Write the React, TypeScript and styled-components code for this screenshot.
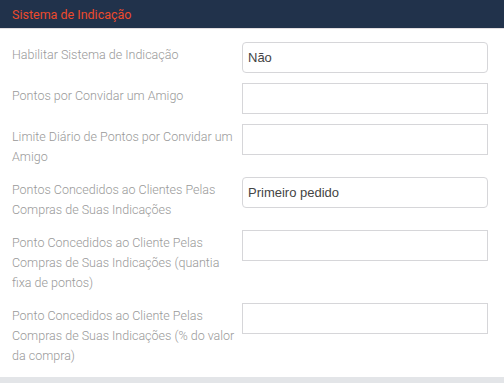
import * as React from "react";
import styled, { createGlobalStyle } from "styled-components";

const GlobalStyle = createGlobalStyle`
    body {
        margin: 0;
        background: #e3e5e8;
        font-family: Roboto, "Liberation Sans", sans-serif;
    }
`;

type Field = {
    label: string
    value?: string
    select?: boolean
}

const fields: Field[] = [
    { label: "Habilitar Sistema de Indicação", value: "Não", select: true },
    { label: "Pontos por Convidar um Amigo" },
    { label: "Limite Diário de Pontos por Convidar um Amigo" },
    { label: "Pontos Concedidos ao Clientes Pelas Compras de Suas Indicações", value: "Primeiro pedido", select: true },
    { label: "Ponto Concedidos ao Cliente Pelas Compras de Suas Indicações (quantia fixa de pontos)" },
    { label: "Ponto Concedidos ao Cliente Pelas Compras de Suas Indicações (% do valor da compra)" },
];

const App: React.FC = () => {
    return (
        <>
            <GlobalStyle />
            <Panel>
                <Header>
                    <Title>Sistema de Indicação</Title>
                </Header>
                <Body>
                    {fields.map((field) => (
                        <Row key={field.label}>
                            <Label>{field.label}</Label>
                            <Control $rounded={!!field.select}>{field.value}</Control>
                        </Row>
                    ))}
                </Body>
            </Panel>
        </>
    )
}

const Panel = styled.div`
    background: #fff;
    width: 504px;
    box-shadow: 0 1px 3px rgba(0, 0, 0, 0.12);
`;

const Header = styled.div`
    height: 28px;
    background: #21324b;
    border-bottom: 1px solid #e2dde0;
    display: flex;
    align-items: center;
    padding: 0 12px;
`;

const Title = styled.span`
    color: #ec4a2c;
    font-size: 12.5px;
`;

const Body = styled.div`
    padding: 13px 16px 11px 12px;
`;

const Row = styled.div`
    display: grid;
    grid-template-columns: 1fr 246px;
    column-gap: 6px;
    align-items: start;
    margin-bottom: 10px;

    &:last-child {
        margin-bottom: 0;
    }
`;

const Label = styled.div`
    color: #999;
    font-size: 12.5px;
    font-weight: 300;
    line-height: 20px;
    padding-top: 3px;
`;

const Control = styled.div<{ $rounded: boolean }>`
    box-sizing: border-box;
    height: 31px;
    border: 1px solid #d6d6d9;
    border-radius: ${(p) => (p.$rounded ? "4px" : "0")};
    padding: 0 5px;
    display: flex;
    align-items: center;
    font-family: "Liberation Sans", Arial, sans-serif;
    font-size: 13px;
    color: #444;
`;

export default App;
